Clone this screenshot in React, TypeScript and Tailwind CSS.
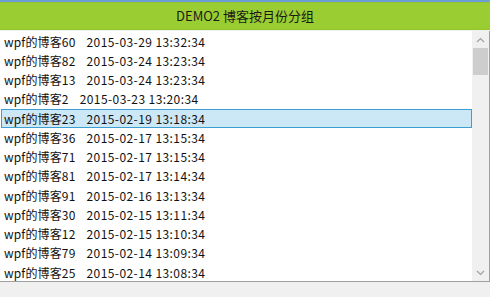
const rows: [string, string][] = [
  ["wpf的博客60", "2015-03-29 13:32:34"],
  ["wpf的博客82", "2015-03-24 13:23:34"],
  ["wpf的博客13", "2015-03-24 13:23:34"],
  ["wpf的博客2", "2015-03-23 13:20:34"],
  ["wpf的博客23", "2015-02-19 13:18:34"],
  ["wpf的博客36", "2015-02-17 13:15:34"],
  ["wpf的博客71", "2015-02-17 13:15:34"],
  ["wpf的博客81", "2015-02-17 13:14:34"],
  ["wpf的博客91", "2015-02-16 13:13:34"],
  ["wpf的博客30", "2015-02-15 13:11:34"],
  ["wpf的博客12", "2015-02-15 13:10:34"],
  ["wpf的博客79", "2015-02-14 13:09:34"],
  ["wpf的博客25", "2015-02-14 13:08:34"],
];

export default function App() {
  return (
    <div className="w-[490px] h-[297px] bg-[#f0f0f0] flex flex-col overflow-hidden font-['Noto_Sans_CJK_SC',sans-serif]">
      <div className="h-[2px] bg-[#6b9ed6]" />
      <div className="h-[28px] bg-[#9acd32] border-y border-[#94c42e] flex items-center justify-center text-[13px] text-[#1a1a1a]">
        DEMO2 博客按月份分组
      </div>
      <div className="h-[251px] mt-[1px] bg-white border-b border-r border-[#a0a0a0] flex">
        <div className="flex-1 flex flex-col pt-[1px] pl-[1px] overflow-hidden">
          {rows.map(([name, date], i) => (
            <div
              key={i}
              className={`h-[19.25px] shrink-0 flex items-center gap-[11px] text-[12px] text-[#111] leading-none ${
                i === 4 ? "bg-[#cce8f7] border border-[#3c9ed1] pl-[2px]" : "pl-[3px]"
              }`}
            >
              <span className="tracking-[0.15px]">{name}</span>
              <span className="tracking-[0.42px]">{date}</span>
            </div>
          ))}
        </div>
        <div className="w-[17px] bg-[#f0f0f0] flex flex-col items-center">
          <div className="h-[17px] w-full flex items-center justify-center">
            <svg width="9" height="6" viewBox="0 0 9 6">
              <path d="M1 5 L4.5 1.5 L8 5" fill="none" stroke="#a0a0a0" strokeWidth="1.2" />
            </svg>
          </div>
          <div className="w-[15px] h-[27px] bg-[#cdcdcd]" />
          <div className="flex-1" />
          <div className="h-[17px] w-full flex items-center justify-center">
            <svg width="9" height="6" viewBox="0 0 9 6">
              <path d="M1 1 L4.5 4.5 L8 1" fill="none" stroke="#a0a0a0" strokeWidth="1.2" />
            </svg>
          </div>
        </div>
      </div>
    </div>
  );
}
